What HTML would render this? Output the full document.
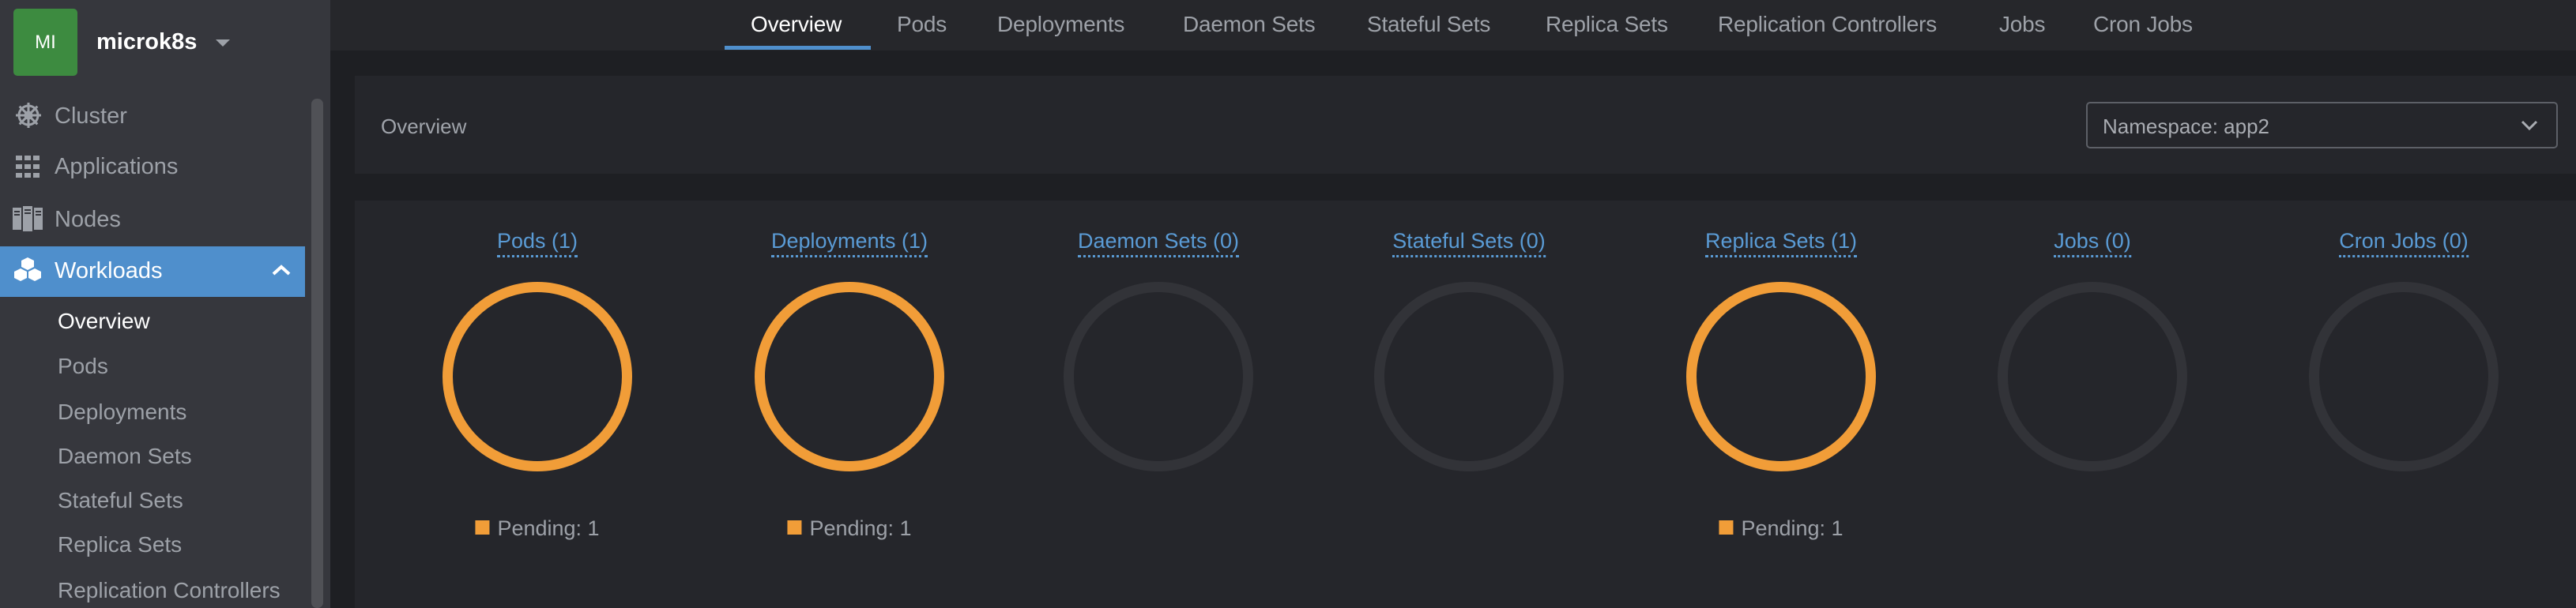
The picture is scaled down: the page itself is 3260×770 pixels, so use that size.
<!DOCTYPE html>
<html><head><meta charset="utf-8"><style>
*{margin:0;padding:0;box-sizing:border-box}
body{width:3260px;height:770px;overflow:hidden;background:#1e1f23;font-family:"Liberation Sans",sans-serif;position:relative}
.abs{position:absolute;white-space:nowrap}
#side{position:absolute;left:0;top:0;width:418px;height:770px;background:#36373d}
.mi{color:#9da1a8;font-size:29px}
.sub{color:#9da1a8;font-size:28px;left:73px}
#nav{position:absolute;left:418px;top:0;width:2842px;height:64px;background:#26272b}
.tab{color:#9da1a8;font-size:28px;top:15px;letter-spacing:-0.2px}
.panel{position:absolute;background:#25262b}
.t{color:#5a9bd5;font-size:27px;top:290px;border-bottom:3px dotted #5a9bd5;padding-bottom:2px;transform:translateX(-50%)}
.ring{position:absolute;top:357px;width:240px;height:240px;border-radius:50%;border:13px solid #f19d38;transform:translateX(-50%)}
.g{border-color:#323338}
.lg{top:654px;color:#9da1a8;font-size:27px;transform:translateX(-50%)}
.lg i{display:inline-block;width:18px;height:18px;background:#f19d38;margin-right:10px;vertical-align:1px}
</style></head><body>
<div id="side">
 <div class="abs" style="left:17px;top:11px;width:81px;height:85px;background:#3d8b40;border-radius:5px;color:#fff;font-size:24px;line-height:85px;text-align:center">MI</div>
 <div class="abs" style="left:122px;top:37px;color:#fff;font-size:29px;font-weight:bold">microk8s</div>
 <div class="abs" style="left:273px;top:50px;width:0;height:0;border-left:9px solid transparent;border-right:9px solid transparent;border-top:9px solid #9da1a8"></div>
 <div class="abs" style="left:394px;top:125px;width:15px;height:645px;background:#505156;border-radius:7px"></div>
 <svg class="abs" style="left:17px;top:127px" width="38" height="38" viewBox="0 0 38 38" fill="none" stroke="#9da1a8" stroke-width="3"><circle cx="19" cy="19" r="12"/><circle cx="19" cy="19" r="4" fill="#9da1a8"/><path d="M19 3V35M3 19H35M7.7 7.7L30.3 30.3M30.3 7.7L7.7 30.3"/></svg>
 <div class="abs mi" style="left:69px;top:131px">Cluster</div>
 <svg class="abs" style="left:20px;top:197px" width="30" height="28" fill="#9da1a8"><rect x="0" y="0" width="8" height="6"/><rect x="11" y="0" width="8" height="6"/><rect x="22" y="0" width="8" height="6"/><rect x="0" y="11" width="8" height="6"/><rect x="11" y="11" width="8" height="6"/><rect x="22" y="11" width="8" height="6"/><rect x="0" y="22" width="8" height="6"/><rect x="11" y="22" width="8" height="6"/><rect x="22" y="22" width="8" height="6"/></svg>
 <div class="abs mi" style="left:69px;top:195px">Applications</div>
 <svg class="abs" style="left:16px;top:261px" width="38" height="32" fill="#9da1a8"><rect x="0" y="2" width="11" height="28"/><rect x="13" y="0" width="12" height="32"/><rect x="27" y="2" width="11" height="28"/><path d="M2 7h7M2 11h7M15 5h8M15 9h8M29 7h7M29 11h7" stroke="#36373d" stroke-width="2"/></svg>
 <div class="abs mi" style="left:69px;top:262px">Nodes</div>
 <div class="abs" style="left:0;top:312px;width:386px;height:64px;background:#4f8fcc"></div>
 <svg class="abs" style="left:17px;top:325px" width="36" height="36" viewBox="0 0 36 36" fill="#fff"><path d="M18 1l8 4v8l-8 4-8-4V5z"/><path d="M9 15l8 4v8l-8 4-8-4v-8z"/><path d="M27 15l8 4v8l-8 4-8-4v-8z"/></svg>
 <div class="abs" style="left:69px;top:327px;color:#fff;font-size:29px">Workloads</div>
 <svg class="abs" style="left:344px;top:334px" width="24" height="16" fill="none" stroke="#fff" stroke-width="4"><path d="M2 13L12 4L22 13"/></svg>
 <div class="abs sub" style="top:391px;color:#fff">Overview</div>
 <div class="abs sub" style="top:448px">Pods</div>
 <div class="abs sub" style="top:506px">Deployments</div>
 <div class="abs sub" style="top:562px">Daemon Sets</div>
 <div class="abs sub" style="top:618px">Stateful Sets</div>
 <div class="abs sub" style="top:674px">Replica Sets</div>
 <div class="abs sub" style="top:732px">Replication Controllers</div>
</div>
<div id="nav"></div>
<div class="abs tab" style="left:950px;color:#fff">Overview</div>
<div class="abs" style="left:917px;top:58px;width:185px;height:5px;background:#4f8fcc"></div>
<div class="abs tab" style="left:1135px">Pods</div>
<div class="abs tab" style="left:1262px">Deployments</div>
<div class="abs tab" style="left:1497px">Daemon Sets</div>
<div class="abs tab" style="left:1730px">Stateful Sets</div>
<div class="abs tab" style="left:1956px">Replica Sets</div>
<div class="abs tab" style="left:2174px">Replication Controllers</div>
<div class="abs tab" style="left:2530px">Jobs</div>
<div class="abs tab" style="left:2649px">Cron Jobs</div>

<div class="panel" style="left:449px;top:96px;width:2811px;height:124px"></div>
<div class="abs" style="left:482px;top:145px;color:#a0a4ab;font-size:26px">Overview</div>
<div class="abs" style="left:2640px;top:129px;width:597px;height:59px;border:2px solid #5d6067;border-radius:5px"></div>
<div class="abs" style="left:2661px;top:145px;color:#a9acb2;font-size:26px">Namespace: app2</div>
<svg class="abs" style="left:3190px;top:152px" width="22" height="14" fill="none" stroke="#a9acb2" stroke-width="3"><path d="M2 2L11 11L20 2"/></svg>

<div class="panel" style="left:449px;top:254px;width:2811px;height:516px"></div>
<div class="abs t" style="left:680px">Pods (1)</div>
<div class="abs t" style="left:1075px">Deployments (1)</div>
<div class="abs t" style="left:1466px">Daemon Sets (0)</div>
<div class="abs t" style="left:1859px">Stateful Sets (0)</div>
<div class="abs t" style="left:2254px">Replica Sets (1)</div>
<div class="abs t" style="left:2648px">Jobs (0)</div>
<div class="abs t" style="left:3042px">Cron Jobs (0)</div>
<div class="ring" style="left:680px"></div>
<div class="ring" style="left:1075px"></div>
<div class="ring g" style="left:1466px"></div>
<div class="ring g" style="left:1859px"></div>
<div class="ring" style="left:2254px"></div>
<div class="ring g" style="left:2648px"></div>
<div class="ring g" style="left:3042px"></div>
<div class="abs lg" style="left:680px"><i></i>Pending: 1</div>
<div class="abs lg" style="left:1075px"><i></i>Pending: 1</div>
<div class="abs lg" style="left:2254px"><i></i>Pending: 1</div>
</body></html>
